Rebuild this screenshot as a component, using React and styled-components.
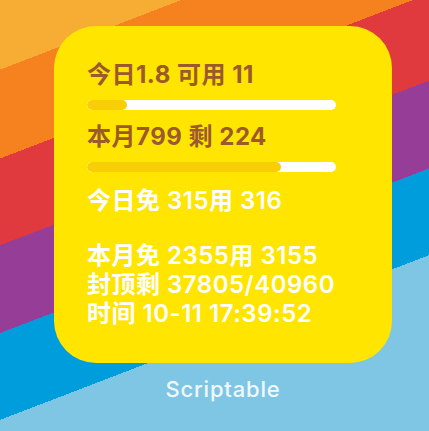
import React from 'react';
import styled, { createGlobalStyle } from 'styled-components';

// --- Global ---

const GlobalStyle = createGlobalStyle`
  html, body {
    margin: 0;
    padding: 0;
  }
  body {
    width: 429px;
    height: 431px;
    overflow: hidden;
    font-family: "Inter", "Noto Sans CJK SC", sans-serif;
  }
`;

// --- Styled Components ---

const Wallpaper = styled.div`
  width: 429px;
  height: 431px;
  box-sizing: border-box;
  padding: 26px 0 0 54px;
  display: flex;
  flex-direction: column;
  align-items: flex-start;
  background: linear-gradient(
    159deg,
    #f7ac33 0 65px,
    #f5821f 65px 148px,
    #e03a3e 148px 229px,
    #963d97 229px 311px,
    #009ddc 311px 392px,
    #7fc6e5 392px
  );
`;

const WidgetSlot = styled.div`
  width: 338px;
  display: flex;
  flex-direction: column;
  align-items: center;
`;

const Widget = styled.div`
  width: 338px;
  height: 337px;
  box-sizing: border-box;
  padding: 34px 33px 0;
  border-radius: 42px;
  background-color: #ffe500;
  display: flex;
  flex-direction: column;
`;

const Line = styled.div`
  font-family: "Inter", "Noto Sans CJK SC", sans-serif;
  font-size: 24px;
  line-height: 29px;
  height: 29px;
  white-space: pre;
  letter-spacing: 0.5px;
  font-weight: ${p => (p.$strong ? 700 : 600)};
  color: ${p => (p.$strong ? '#9c5a2c' : '#ffffff')};
  margin-top: ${p => p.$gap || 0}px;
`;

const Track = styled.div`
  width: 249px;
  height: 10px;
  border-radius: 5px;
  background-color: #ffffff;
  overflow: hidden;
  margin-top: 11px;
`;

const Fill = styled.div`
  height: 100%;
  border-radius: 5px;
  background-color: #f8cf06;
`;

const AppLabel = styled.div`
  margin-top: 14px;
  padding: 0 16px;
  font-family: "Inter", "Open Sans", sans-serif;
  font-size: 22px;
  font-weight: 500;
  line-height: 24px;
  color: #f1f8fc;
  letter-spacing: 0.8px;
`;

// --- Component ---

const usage = {
  today: 1.8,
  todayLeft: 11,
  month: 799,
  monthLeft: 224,
};

function App() {
  const todayRatio = 0.16;
  const monthRatio = usage.month / (usage.month + usage.monthLeft);

  return (
    <>
      <GlobalStyle />
      <Wallpaper>
        <WidgetSlot>
          <Widget>
            <Line $strong>今日1.8 可用 11</Line>
            <Track>
              <Fill style={{ width: `${todayRatio * 100}%` }} />
            </Track>
            <Line $strong $gap={12}>本月799 剩 224</Line>
            <Track>
              <Fill style={{ width: `${monthRatio * 100}%` }} />
            </Track>
            <Line $gap={14}>今日免 315用 316</Line>
            <Line $gap={26}>本月免 2355用 3155</Line>
            <Line>封顶剩 37805/40960</Line>
            <Line>时间 10-11 17:39:52</Line>
          </Widget>
          <AppLabel>Scriptable</AppLabel>
        </WidgetSlot>
      </Wallpaper>
    </>
  );
}

export default App;
